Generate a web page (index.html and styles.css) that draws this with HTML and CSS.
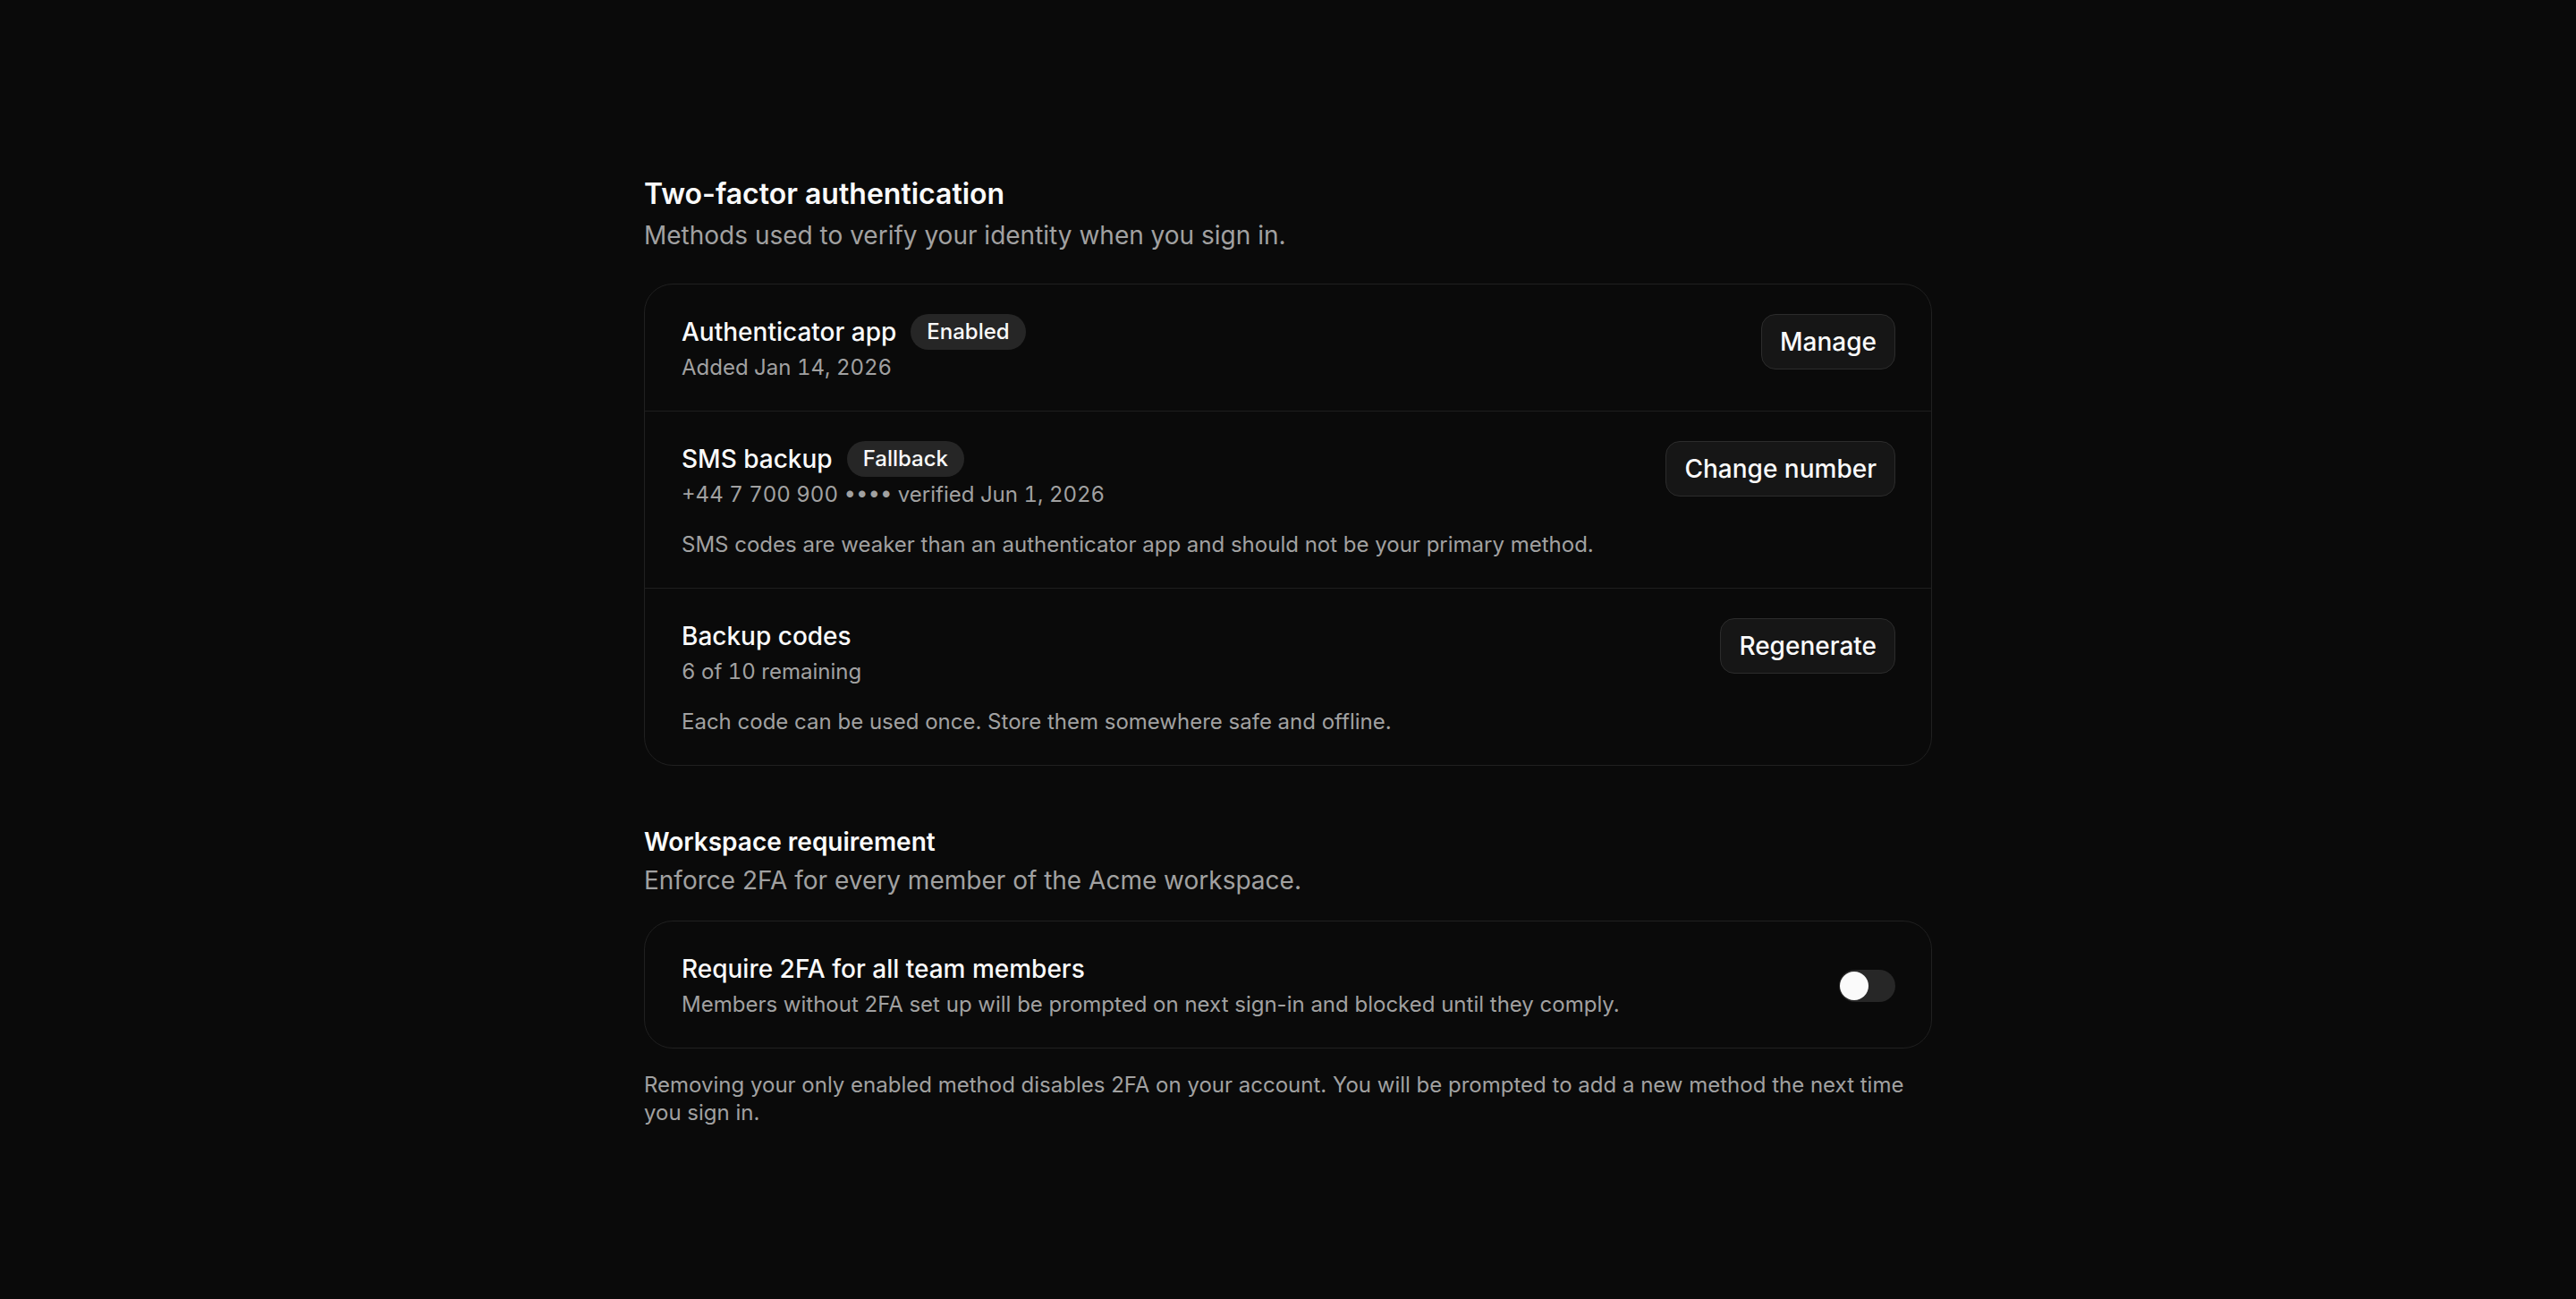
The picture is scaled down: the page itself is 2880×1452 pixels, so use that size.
FILE: index.html
```html
<!DOCTYPE html>
<html lang="en">
<head>
<meta charset="utf-8">
<title>Two-factor authentication</title>
<link rel="stylesheet" href="styles.css">
</head>
<body>
<main class="page">
  <section class="section">
    <h1 class="section-title">Two-factor authentication</h1>
    <p class="section-desc">Methods used to verify your identity when you sign in.</p>
    <div class="card card-methods">
      <div class="row">
        <div class="row-body">
          <div class="row-head">
            <span class="row-title">Authenticator app</span>
            <span class="badge">Enabled</span>
          </div>
          <div class="row-meta row-meta-num">Added Jan 14, 2026</div>
        </div>
        <button class="btn" type="button">Manage</button>
      </div>
      <div class="row">
        <div class="row-body">
          <div class="row-head">
            <span class="row-title">SMS backup</span>
            <span class="badge">Fallback</span>
          </div>
          <div class="row-meta row-meta-num">+44 7 700 900 •••• verified Jun 1, 2026</div>
          <div class="row-note">SMS codes are weaker than an authenticator app and should not be your primary method.</div>
        </div>
        <button class="btn" type="button">Change number</button>
      </div>
      <div class="row">
        <div class="row-body">
          <div class="row-head">
            <span class="row-title">Backup codes</span>
          </div>
          <div class="row-meta row-meta-num">6 of 10 remaining</div>
          <div class="row-note">Each code can be used once. Store them somewhere safe and offline.</div>
        </div>
        <button class="btn" type="button">Regenerate</button>
      </div>
    </div>
  </section>

  <section class="section section-workspace">
    <h2 class="section-title section-title-sm">Workspace requirement</h2>
    <p class="section-desc">Enforce 2FA for every member of the Acme workspace.</p>
    <div class="card card-workspace">
      <div class="row row-center">
        <div class="row-body">
          <div class="row-head">
            <span class="row-title">Require 2FA for all team members</span>
          </div>
          <div class="row-meta">Members without 2FA set up will be prompted on next sign-in and blocked until they comply.</div>
        </div>
        <button class="switch" type="button" role="switch" aria-checked="false" aria-label="Require 2FA for all team members"><span class="switch-knob"></span></button>
      </div>
    </div>
  </section>

  <p class="footnote">Removing your only enabled method disables 2FA on your account. You will be prompted to add a new method the next time you sign in.</p>
</main>
</body>
</html>
```

FILE: styles.css
```css
* {
  box-sizing: border-box;
}

html, body {
  margin: 0;
  padding: 0;
  background: #0a0a0a;
}

body {
  font-family: Inter, "Noto Sans", sans-serif;
  color: #fafafa;
  -webkit-font-smoothing: antialiased;
}

.page {
  max-width: 1440px;
  margin: 0 auto;
  padding: 197px 0 180px;
}

.section-title {
  margin: 0;
  font-size: 32px;
  line-height: 40px;
  font-weight: 600;
  color: #fafafa;
}

.section-title-sm {
  font-size: 28px;
  line-height: 36px;
}

.section-desc {
  margin: 6px 0 34px;
  font-size: 28px;
  line-height: 40px;
  font-weight: 400;
  color: #a1a1a1;
}

.section-workspace {
  margin-top: 67px;
}

.section-workspace .section-desc {
  margin: 5px 0 25px;
}

.card {
  border: 1px solid #202020;
  border-radius: 32px;
  background: #0a0a0a;
}

.row {
  display: flex;
  align-items: flex-start;
  justify-content: space-between;
  gap: 32px;
  padding: 33px 40px 30px;
}

.row + .row {
  border-top: 1px solid #1e1e1e;
}

.row-center {
  align-items: center;
}

.row-body {
  display: flex;
  flex-direction: column;
  min-width: 0;
  padding-left: 1px;
}

.row-head {
  display: flex;
  align-items: center;
  gap: 16px;
  min-height: 40px;
}

.row-title {
  font-size: 28px;
  line-height: 36px;
  font-weight: 500;
  color: #fafafa;
}

.badge {
  display: inline-flex;
  align-items: center;
  height: 40px;
  padding: 0 18px;
  border-radius: 20px;
  background: #262626;
  color: #fafafa;
  font-size: 24px;
  font-weight: 500;
  line-height: 1;
}

.row-meta {
  margin-top: 2px;
  font-size: 24px;
  line-height: 36px;
  color: #a1a1a1;
}

.row-meta-num {
  font-variant-numeric: tabular-nums;
}

.row-note {
  margin-top: 20px;
  font-size: 24px;
  line-height: 36px;
  color: #a1a1a1;
}

.btn {
  flex: none;
  height: 62px;
  padding: 0 20px;
  border: 1px solid #2c2c2c;
  border-radius: 16px;
  background: #161616;
  color: #fafafa;
  font-family: inherit;
  font-size: 28px;
  font-weight: 500;
  line-height: 32px;
  cursor: pointer;
}

.switch {
  flex: none;
  position: relative;
  width: 63px;
  height: 36px;
  padding: 0;
  border: none;
  border-radius: 18px;
  background: #272727;
  cursor: pointer;
}

.switch-knob {
  position: absolute;
  top: 2px;
  left: 1px;
  width: 32px;
  height: 32px;
  border-radius: 50%;
  background: #fafafa;
}

.footnote {
  margin: 25px 0 0;
  font-size: 24px;
  line-height: 31px;
  color: #a1a1a1;
}
```
